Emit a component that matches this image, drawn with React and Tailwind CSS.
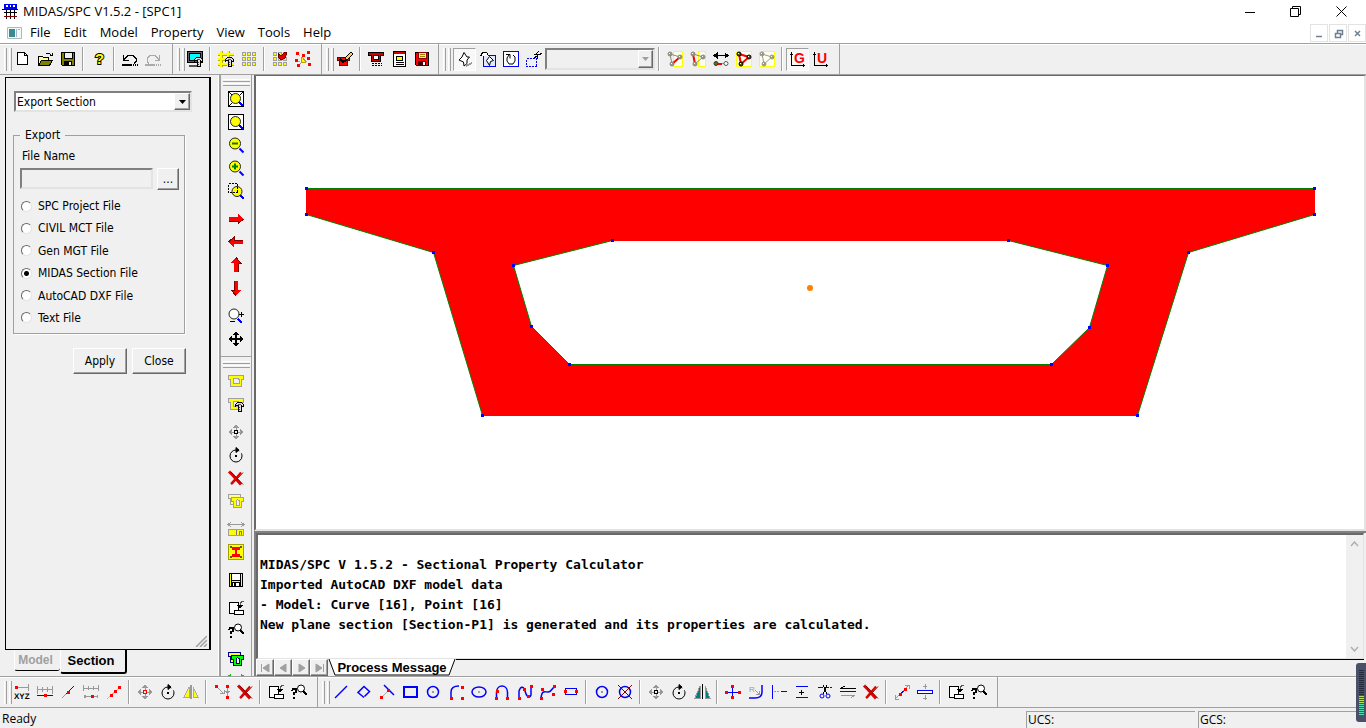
import { useState } from 'react'

const HAMMER = (
  <g>
    <path d="M7.5 8.5l2-2h4l2 2v2h-1l-1-1v6h-3v-6h-2l-1 1z" fill="#ddd" stroke="#000" />
    <path d="M10 8h3v1h-3zM11 11h1v1h-1zM11 13h1v1h-1z" fill="#555" />
  </g>
)

const CROSS = (
  <g fill="none" shapeRendering="auto">
    <path d="M1 1.5l4 4 8 9" stroke="#e00000" strokeWidth="3" />
    <path d="M13 2.5L3 14" stroke="#e00000" strokeWidth="2" />
    <path d="M4 14.5L15 2.5M3 2l12 12.5" stroke="#900000" />
  </g>
)

const EXPORT = (
  <g>
    <path d="M1.5 2.5h9v11h-9z" fill="#fff" stroke="#000" />
    <path d="M6.5 10.5h9v4h-9z" fill="#fff" stroke="#000" />
    <path d="M15.5 1.5h-2l-1 2v4" fill="none" stroke="#555" />
    <path d="M9 5h6l-3 4z" fill="#000" />
  </g>
)

const QUERY = (
  <g fill="none" stroke="#000">
    <path d="M1 7l1-2h3v3l-2 1v2M3 13v2" strokeWidth="2" />
    <circle cx="10" cy="4.500" r="3.500" fill="#fff" shapeRendering="auto" />
    <path d="M12 7l4 4" strokeWidth="2" />
  </g>
)

const ROTATE = (
  <g fill="none" stroke="#000" shapeRendering="auto">
    <circle cx="8" cy="9" r="6" strokeDasharray="31 3" />
    <path d="M8 .5v5l3-2.500z" fill="#000" />
    <path d="M7 8h2v2H7z" fill="#000" stroke="none" />
  </g>
)

const SQUARES = [1, 6, 11].map((y) =>
  [1, 6, 11].map((x) => (
    <rect key={`${x}-${y}`} x={x + 0.5} y={y + 0.5} width="3" height="3" fill="#ff0" stroke="#a0a0a0" />
  ))
)

const HEADS = 'M5 4l3-4 3 4zM5 12l3 4 3-4zM4 5L0 8l4 3zM12 5l4 3-4 3z'

function moveIcon(stroke, dot) {
  return (
    <g>
      <path d="M8 2v12M2 8h12" stroke={stroke} fill="none" />
      <path d={HEADS} fill={stroke} />
      <path d="M6.500 6.500h3v3h-3z" fill="#f0f0f0" stroke={dot} />
    </g>
  )
}

function redDots(points) {
  return points.map(([x, y]) => <rect key={`${x}-${y}`} x={x - 1} y={y - 1} width="3" height="3" fill="#f00" />)
}

function lens(sign) {
  return (
    <g shapeRendering="auto">
      <path d="M11.500 11.500l4 4" stroke="#00f" strokeWidth="2" />
      <circle cx="7" cy="6.500" r="5.500" fill="#ff0" stroke="#222" />
      {sign && <path d={sign} stroke="#008000" strokeWidth="2" />}
    </g>
  )
}

function fitLens(corners) {
  return (
    <g>
      <path d="M.5.5h15v15H.5z" fill="#fff" stroke="#000" />
      {corners && <path d="M1 1l3 3M15 1l-3 3M1 15l3-3" stroke="#000" />}
      <path d="M11 11l4 4" stroke="#00f" strokeWidth="2" />
      <circle cx="7.500" cy="7.500" r="5" fill="#ff0" stroke="#222" shapeRendering="auto" />
    </g>
  )
}

function arrow(turn) {
  return (
    <g transform={`rotate(${turn} 8 8)`}>
      <path d="M1 6h9V3l5.500 5-5.500 5v-3H1z" fill="#f00" />
      <path d="M1 10h9v3l5.500-5" stroke="#800000" fill="none" />
    </g>
  )
}

function nodes(red, line, box) {
  return (
    <g shapeRendering="auto">
      {box && <path d={box} fill="#fffff0" stroke="#ff0" />}
      <path d="M3 3l2 10M5 13l8-7M3 3l10 3" fill="none" stroke={line} />
      {red && <path d={red} fill="none" stroke="#f00" strokeWidth="2" />}
      {[[3, 3], [5, 13], [13, 6]].map(([x, y]) => (
        <g key={x}>
          <circle cx={x} cy={y} r="2" fill={line === '#000' ? '#606000' : '#9a9a70'} stroke={line} />
          <path d={`M${x - 1} ${y - 1}h1v1h-1z`} fill="#fff" />
        </g>
      ))}
    </g>
  )
}

function disk(body, label) {
  return (
    <g>
      <path d="M1.500 1.500h13v13h-12l-1-1z" fill={body} stroke="#000" />
      <path d="M4.500 1.500h8v6h-8z" fill={label} stroke="#000" />
      <path d="M4 10h8v5H4z" fill="#000" />
      <path d="M9 11h2v3H9z" fill="#f0f0f0" />
    </g>
  )
}

function section(fill, stroke) {
  return (
    <path
      d="M.5 2.500h15v4h-2v7h-11v-7h-2zM6 5.500l-1 1v4h6v-4l-1-1z"
      fillRule="evenodd"
      fill={fill}
      stroke={stroke}
    />
  )
}

function floodShape(front, back, stroke) {
  return (
    <g>
      <path d="M.5 1.500h12v4h-2v6h-8v-6h-2z" fill={back} stroke={stroke} />
      <path d="M3.500 4.500h12v4h-2v6h-8v-6h-2z" fill={front} stroke={stroke} />
      <path d="M8 12.500v-5l1.500-1 1.500 1v5z" fill="#f0f0f0" stroke={stroke} />
    </g>
  )
}

const circleShape = (
  <g>
    <circle cx="8" cy="8" r="5.500" fill="none" stroke="#00f" strokeWidth="1.500" shapeRendering="auto" />
    <path d="M7 7h2v2H7z" fill="#999" />
  </g>
)

const ICONS = {
  new: <path d="M3.500 1.500h7l3 3v9h-10zM10.500 1.500v3h3" fill="#fff" stroke="#000" />,
  open: (
    <g stroke="#000">
      <path d="M1.500 14V5.500h4l1 1h5v3" fill="#ffff99" />
      <path d="M1.500 14.500l3-5h11l-3 5z" fill="#808000" />
      <path d="M8.500 3.500l1-1h3l2 2M15.500 1.500v3h-3" fill="none" />
    </g>
  ),
  save: disk('#808000', '#f0f0f0'),
  help: (
    <text x="4" y="13" fontFamily="Liberation Sans" fontWeight="700" fontSize="15" fill="#ff0" stroke="#000" strokeWidth="2" paintOrder="stroke" shapeRendering="auto">?</text>
  ),
  undo: (
    <g fill="none" stroke="#000">
      <path d="M1.500 4v5h5" />
      <path d="M2 8.500l4-4h5l3 3v3l-2 2" />
      <path d="M0 13.500h10" strokeWidth="2" />
      <path d="M11 13.500h5" strokeWidth="2" strokeDasharray="1 1" />
    </g>
  ),
  redo: (
    <g fill="none" stroke="#aaa">
      <path d="M14.500 4v5h-5" />
      <path d="M14 8.500l-4-4H5l-3 3v3l2 2" />
      <path d="M0 13.500h10" strokeWidth="2" />
      <path d="M11 13.500h5" strokeWidth="2" strokeDasharray="1 1" />
    </g>
  ),
  display: (
    <g>
      <path d="M.5.5h15v11H.5z" fill="#606060" stroke="#000" />
      <path d="M2.500 2.500h11v7h-11z" fill="#0ff" stroke="#000" />
      <path d="M2 14.500h10" stroke="#555" strokeWidth="2" />
      {HAMMER}
    </g>
  ),
  gridSet: (
    <g>
      <path d="M0 3.500h16M0 8.500h16M0 13.500h16M3.500 0v16M10.500 0v16" stroke="#b0b000" strokeWidth="2" />
      <path d="M0 2.500h16M0 7.500h16M0 12.500h16M2.500 0v16M9.500 0v16" stroke="#ff0" strokeWidth="2" />
      {HAMMER}
    </g>
  ),
  grid: <g>{SQUARES}</g>,
  gridSnap: (
    <g>
      {SQUARES}
      <path d="M6 2l3 3 4-4h2l-2 6-4 2-3-3z" fill="#e00000" stroke="#700000" />
    </g>
  ),
  scatter: (
    <g>
      <path d="M4 4l8 7M3 11l7-5" stroke="#aaa" strokeDasharray="2 2" />
      {redDots([[2, 2], [8, 4], [13, 1], [1, 9], [13, 7], [3, 14], [14, 13]])}
      <path d="M7 6l4 5-5 1z" fill="#ff0" stroke="#c0a000" />
    </g>
  ),
  sectionEdit: (
    <g>
      <path d="M.5 6.500h12v3h-2v5h-8v-5h-2z" fill="#f00" stroke="#600" />
      <path d="M8 10l1-4 5-5 2 2-5 5z" fill="#ffd060" stroke="#000" />
      <path d="M3 8l3 3 3-2" fill="none" stroke="#000" strokeWidth="2" />
    </g>
  ),
  sectionList: (
    <g>
      <path d="M.5 1.500h15v3h-3v6h-9v-6h-3z" fill="#d00000" stroke="#000" />
      <path d="M5.500 4.500h5v4h-5z" fill="#fff" stroke="#000" />
      <path d="M4 12.500h10M4 14.500h10" stroke="#000" strokeDasharray="2 1" />
    </g>
  ),
  report: (
    <g>
      <path d="M2.500.5h12v15h-12z" fill="#fff" stroke="#000" />
      <path d="M3 1h11v2H3z" fill="#d00000" />
      <path d="M5.500 5.500h6v4h-6z" fill="#ff0" stroke="#000" />
      <path d="M5 11.500h8M5 13.500h8" stroke="#000" />
    </g>
  ),
  saveRed: (
    <g>
      <path d="M1.500 1.500h13v13h-12l-1-1z" fill="#f00" stroke="#000" />
      <path d="M4.500 1.500h8v6h-8z" fill="#ff0" stroke="#800" />
      <path d="M6 3.500h5M6 5.500h5" stroke="#a08000" />
      <path d="M4 10h8v5H4z" fill="#400" />
      <path d="M9 11h2v3H9z" fill="#fff" />
    </g>
  ),
  selPick: (
    <g>
      <path d="M7 1.500l3 4.500h2.500L10 9v3.500L7 15l-.500-4L2 9l3-3z" fill="#fff" stroke="#000" shapeRendering="auto" />
      <path d="M9 15l6-3" stroke="#999" strokeWidth="2" />
    </g>
  ),
  selWindow: (
    <g>
      <path d="M3.500 4.500h12v11h-12z" fill="#dfe8ff" stroke="#00f" />
      <path d="M.5 5.500l2-4h4l2 3" fill="#fff" stroke="#000" />
      <path d="M9.500 5.500l4 4-3 1-1 4-3-5z" fill="#fff" stroke="#000" shapeRendering="auto" />
    </g>
  ),
  selPolygon: (
    <g>
      <path d="M.5.5h15v15H.5z" fill="#fff" stroke="#00f" />
      <path d="M3 3.500h4v4M6 4L4 7v3l2 3h4l2-3V6l-2-2" fill="none" stroke="#000" shapeRendering="auto" />
    </g>
  ),
  selCross: (
    <g>
      <path d="M.5 7.500h10v8H.5z" fill="none" stroke="#00f" strokeDasharray="2 1" />
      <path d="M7 8l5-4M8 3.500h5M12 8L11 5M10 2.500l3-2M13 3.500l3-1" stroke="#000" fill="none" />
    </g>
  ),
  nodeA: nodes('M5 13l8-7', '#888', 'M6.500.5h9v15h-9z'),
  nodeB: nodes('M3 3l2 10', '#888', 'M8.500.5h7v15h-7z'),
  nodeSwap: (
    <g>
      <path d="M1 4.500h14" stroke="#000" />
      <path d="M4 2v5L1 4.500zM12 2v5l3-2.500z" fill="#000" stroke="#000" />
      <path d="M4 12.500h9" stroke="#999" />
      <path d="M4 12.500h5" stroke="#f00" strokeWidth="2" />
      <circle cx="3" cy="12.500" r="2" fill="#707000" stroke="#333" shapeRendering="auto" />
      <circle cx="13" cy="12.500" r="2" fill="#fff" stroke="#555" shapeRendering="auto" />
    </g>
  ),
  nodeC: nodes('M3 3l2 10 8-7z', '#000', 'M.5.5h15v15H.5z'),
  nodeD: nodes(null, '#999', 'M.5.5h15v15H.5z'),
  axisG: (
    <g>
      <path d="M1.500 15V1M0 3.500h3M1 14.500h14M13.500 13v3" stroke="#000" />
      <text x="4" y="12" fontFamily="Liberation Sans" fontWeight="700" fontSize="14" fill="#f00">G</text>
    </g>
  ),
  axisU: (
    <g>
      <path d="M1.500 15V1M0 3.500h3M1 14.500h14M13.500 13v3" stroke="#000" />
      <text x="4" y="12" fontFamily="Liberation Sans" fontWeight="700" fontSize="14" fill="#f00">U</text>
    </g>
  ),
  zoomAll: fitLens(true),
  zoomFit: fitLens(false),
  zoomOut: lens('M4 6.500h6'),
  zoomIn: lens('M4 6.500h6M7 3.500v6'),
  zoomWindow: (
    <g>
      <path d="M12 12l4 4" stroke="#00f" strokeWidth="2" />
      <circle cx="9" cy="8.500" r="5" fill="#ff0" stroke="#222" shapeRendering="auto" />
      <path d="M.5.5h9v9h-9z" fill="none" stroke="#000" strokeDasharray="2 1" />
    </g>
  ),
  right: arrow(0),
  left: arrow(180),
  up: arrow(270),
  down: arrow(90),
  zoomDynamic: (
    <g>
      <path d="M10 11l4 4" stroke="#00f" strokeWidth="2" />
      <circle cx="6" cy="6" r="5" fill="#fff" stroke="#222" shapeRendering="auto" />
      <path d="M11 6.500h5M13.500 4v5M2 13.500h5" stroke="#000" />
    </g>
  ),
  pan: (
    <g>
      <path d="M8 1v14M1 8h14" stroke="#000" strokeWidth="2" />
      <path d={HEADS} fill="#000" />
    </g>
  ),
  section: section('#ff0', '#a0a0a0'),
  sectionSet: (
    <g>
      {section('#ff0', '#a0a0a0')}
      {HAMMER}
    </g>
  ),
  moveGray: moveIcon('#999', '#000'),
  movePoint: moveIcon('#999', '#f00'),
  rotate: ROTATE,
  remove: CROSS,
  sectionCopy: floodShape('#ff0', '#ffff80', '#a0a0a0'),
  sectionWidth: (
    <g>
      <path d="M1 3.500h14M3 1L0 3.500 3 6M13 1l3 2.500L13 6" fill="none" stroke="#999" />
      <path d="M.5 8.500h15v6H.5z" fill="#ff0" stroke="#a0a0a0" />
      <path d="M8 9v5M11.500 14v-4h2v4" stroke="#777" fill="none" />
    </g>
  ),
  beam: (
    <g>
      <path d="M.5.5h15v15H.5z" fill="#ff0" stroke="#a0a000" />
      <path d="M2 2h2v2H2zM12 2h2v2h-2zM2 12h2v2H2zM12 12h2v2h-2z" fill="#555" />
      <path d="M4 3h8v3H9v4h3v3H4v-3h3V6H4z" fill="#f00" />
    </g>
  ),
  saveBlack: (
    <g>
      <path d="M1 1h14v14H1z" fill="#000" />
      <path d="M4 2h8v6H4z" fill="#fff" />
      <path d="M2 2h1v12H2zM13 2h1v12h-1zM4 9h8v1H4z" fill="#ff0" />
      <path d="M5 11h6v3H5z" fill="#fff" />
      <path d="M6 11h2v3H6z" fill="#000" />
    </g>
  ),
  exportTo: EXPORT,
  query: QUERY,
  sectionGreen: floodShape('#0f0', '#ff0', '#000080'),
  check: <path d="M1 1l6 7M15 1L3 15" stroke="#0c0" strokeWidth="3" />,
  pointXyz: (
    <g>
      <path d="M4 3.500h11M14.500 0v7" stroke="#999" />
      {redDots([[2, 3]])}
      <text x="0" y="15" fontFamily="Liberation Sans" fontWeight="700" fontSize="8" textRendering="geometricPrecision">XYZ</text>
    </g>
  ),
  pointSplit: (
    <g>
      <path d="M.5 2v8M15.500 2v8M5.500 3v5M10.500 3v5M1 5.500h14" stroke="#999" />
      <path d="M0 11.500h16" stroke="#00f" />
      {redDots([[8, 11]])}
    </g>
  ),
  pointLine: (
    <g>
      <path d="M3 13L14 2" stroke="#00f" />
      <path d="M2 14l4-4" stroke="#999" />
      {redDots([[8, 8]])}
    </g>
  ),
  pointDivide: (
    <g>
      <path d="M.5 1v6M15.500 1v6M5.500 2v4M10.500 2v4M1 4.500h14M2 12.500h12" stroke="#999" />
      {redDots([[9, 12]])}
      <path d="M1 11h2v3H1zM14 11h1v3h-1z" fill="#999" />
    </g>
  ),
  pointOffset: (
    <g>
      <path d="M1 15L14 3" stroke="#bbb" />
      {redDots([[5, 11], [9, 7], [13, 3]])}
    </g>
  ),
  mirrorPoint: (
    <g>
      <path d="M8 1v14" stroke="#999" strokeWidth="2" />
      <path d="M6 3v10H1zM10 3v10h5z" fill="#ff0" stroke="#aaa" />
    </g>
  ),
  pointMerge: (
    <g>
      <path d="M3 3l7 7M6 9h4V6M13 4v8" fill="none" stroke="#999" />
      {redDots([[2, 2], [13, 2], [13, 13]])}
      <path d="M11 7h5l-2.500 3z" fill="#999" />
    </g>
  ),
  line: <path d="M2 14L14 2" stroke="#00f" strokeWidth="1.500" shapeRendering="auto" />,
  polyline: <path d="M8 13.500L2 8.500l6-6 5.500 5-5 5" fill="none" stroke="#00f" strokeWidth="1.500" shapeRendering="auto" />,
  tangent: (
    <g shapeRendering="auto">
      <path d="M5 1l10 10" stroke="#00f" strokeWidth="1.500" />
      <path d="M3 13l6-6" stroke="#aaa" />
      {redDots([[2, 13], [9, 6]])}
    </g>
  ),
  rect: <path d="M2 3h13v10H2z" fill="none" stroke="#00f" strokeWidth="2" />,
  circle: circleShape,
  arc: (
    <g>
      <path d="M3 13V8c0-4 3-6 8-6" fill="none" stroke="#00f" strokeWidth="1.500" shapeRendering="auto" />
      {redDots([[14, 3], [3, 14], [14, 14]])}
    </g>
  ),
  ellipse: (
    <g>
      <ellipse cx="8" cy="8" rx="7" ry="5" fill="none" stroke="#00f" strokeWidth="1.500" shapeRendering="auto" />
      <path d="M7 7h2v2H7z" fill="#aaa" />
    </g>
  ),
  arch: (
    <g>
      <path d="M2.500 13V8C3 0 13 0 13.500 8v5" fill="none" stroke="#00f" strokeWidth="1.500" shapeRendering="auto" />
      {redDots([[2, 14], [3, 7], [13, 14]])}
    </g>
  ),
  spline: (
    <g>
      <path d="M2 13V7c2-6 5-4 6 0s4 9 6 4V2" fill="none" stroke="#00f" strokeWidth="1.500" shapeRendering="auto" />
      {redDots([[2, 14], [7, 5], [14, 2], [11, 12]])}
    </g>
  ),
  curve: (
    <g>
      <path d="M1 14c1-8 3-6 7-6s3-4 7-5" fill="none" stroke="#00f" strokeWidth="1.500" shapeRendering="auto" />
      {redDots([[1, 14], [2, 5], [14, 2], [13, 10]])}
    </g>
  ),
  link: (
    <g>
      <path d="M2.500 4.500h11v6h-11z" fill="none" stroke="#00f" />
      {redDots([[2, 7], [13, 7]])}
    </g>
  ),
  circleCut: (
    <g>
      {circleShape}
      <path d="M1 1l14 14M15 1L1 15" stroke="#800000" shapeRendering="auto" />
    </g>
  ),
  mirror: (
    <g>
      <path d="M8.500 0v15" stroke="#000" />
      <path d="M6 2v12H1z" fill="#008080" stroke="#999" />
      <path d="M11 2v12h5z" fill="#008080" stroke="#999" />
    </g>
  ),
  intersect: (
    <g>
      <path d="M7.500 3v11M2 8.500h12" stroke="#00f" />
      {redDots([[7, 2], [7, 13], [1, 8], [14, 8]])}
    </g>
  ),
  fillet: (
    <g>
      <path d="M14 1v7c0 4-3 6-7 6H1" fill="none" stroke="#00f" strokeWidth="1.500" shapeRendering="auto" />
      <text x="1" y="8" fontFamily="Liberation Sans" fontSize="8" fill="#999">R</text>
      <path d="M7 6l4 4M11 7v3H8" stroke="#999" fill="none" />
    </g>
  ),
  extend: (
    <g>
      <path d="M1.500 1v14M10 7.500h6" stroke="#00f" />
      <path d="M3 7.500h6" stroke="#999" strokeDasharray="2 1" />
    </g>
  ),
  offset: (
    <g>
      <path d="M2 2.500h12M2 13.500h12" stroke="#00f" />
      <path d="M5 8.500h5M7.500 6v5" stroke="#000" />
    </g>
  ),
  trim: (
    <g>
      <path d="M1 3.500h14" stroke="#00f" strokeDasharray="5 1" />
      <path d="M6 1l4 9M10 1L6 10" stroke="#000" />
      <circle cx="5" cy="12" r="2" fill="none" stroke="#00f" shapeRendering="auto" />
      <circle cx="11" cy="12" r="2" fill="none" stroke="#00f" shapeRendering="auto" />
    </g>
  ),
  parallel: (
    <g>
      <path d="M0 4.500h16M5 2L1 4" stroke="#000" />
      <path d="M0 7.500h16" stroke="#00f" />
      <path d="M1 11.500h14M15 11l-4 3" stroke="#999" />
    </g>
  ),
  stretch: (
    <g>
      <path d="M1 15L15 1M11 1h4v4M1 11v4h4" fill="none" stroke="#999" />
      <path d="M6 10l5-4" stroke="#00f" />
      {redDots([[6, 10], [11, 5]])}
    </g>
  ),
  thicken: (
    <g>
      <path d="M8 0v5M6 2h4M8 11v5M6 14h4" stroke="#999" />
      <path d="M.5 6.500h15v3H.5z" fill="#fff" stroke="#00f" />
    </g>
  ),
}

const TOP_GROUPS = [
  { box: 'w-[173px] pl-[10px]', items: ['new', 'open', 'save', '|', 'help', '|', 'undo', 'redo'] },
  { box: 'w-[149px] pl-[10px]', items: ['display', '|', 'gridSet', 'grid', '|', 'gridSnap', 'scatter'] },
  { box: 'w-[117px] pl-[11px]', items: ['sectionEdit', '|', 'sectionList', 'report', 'saveRed'] },
  {
    box: 'w-[401px] pl-[14px]',
    items: ['selPick', 'selWindow', 'selPolygon', 'selCross', 'combo', '|', 'nodeA', 'nodeB', 'nodeSwap', 'nodeC', 'nodeD', '|', 'axisG', 'axisU'],
  },
]

const BOTTOM_GROUPS = [
  {
    box: 'w-[318px] pl-[10px]',
    items: ['pointXyz', 'pointSplit', 'pointLine', 'pointDivide', 'pointOffset', '|', 'movePoint', 'rotate', 'mirrorPoint', '|', 'pointMerge', 'remove', '|', 'exportTo', 'query'],
  },
  {
    box: 'w-[680px] pl-[11px]',
    items: [
      'line', 'polyline', 'tangent', 'rect', 'circle', 'arc', 'ellipse', 'arch', 'spline', 'curve', 'link', '|',
      'circle', 'circleCut', '|', 'moveGray', 'rotate', 'mirror', '|',
      'intersect', 'fillet', 'extend', 'offset', 'trim', 'parallel', 'remove', '|',
      'stretch', 'thicken', '|', 'exportTo', 'query',
    ],
  },
]

const VIEW_TOOLS = [
  ['zoomAll', 'zoomFit', 'zoomOut', 'zoomIn', 'zoomWindow'],
  ['right', 'left', 'up', 'down'],
  ['zoomDynamic', 'pan'],
]

const MODEL_TOOLS = [
  ['section', 'sectionSet'],
  ['moveGray', 'rotate', 'remove', 'sectionCopy'],
  ['sectionWidth', 'beam'],
  ['saveBlack'],
  ['exportTo', 'query'],
  ['sectionGreen', 'check'],
]

const PRESSED = ['selPick', 'axisG']

const FORMATS = ['SPC Project File', 'CIVIL MCT File', 'Gen MGT File', 'MIDAS Section File', 'AutoCAD DXF File', 'Text File']

const OUTER = [[50, 112], [1058, 112], [1058, 138], [932, 176], [881, 339], [226, 339], [177, 176], [50, 138]]
const INNER = [[356, 164], [752, 164], [851, 189], [833, 251], [795, 288], [313, 288], [275, 250], [257, 189]]

const RAISED = 'bg-[#f0f0f0] border border-t-white border-l-white border-r-[#696969] border-b-[#696969] shadow-[inset_-1px_-1px_0_#a0a0a0]'
const SUNKEN = 'border-2 border-t-[#808080] border-l-[#808080] border-r-[#e3e3e3] border-b-[#e3e3e3]'

function ToolButton({ name }) {
  const pressed = PRESSED.includes(name)
  return (
    <button
      aria-label={name}
      className={`flex h-[23px] w-[23px] shrink-0 items-center justify-center ${
        pressed ? 'border border-t-[#a0a0a0] border-l-[#a0a0a0] border-r-white border-b-white bg-[#f8f8f8]' : ''
      }`}
    >
      <svg width="16" height="16" viewBox="0 0 16 16" className="shrink-0 overflow-visible" shapeRendering="crispEdges">
        {ICONS[name]}
      </svg>
    </button>
  )
}

function Grip() {
  return (
    <span className="absolute top-[4px] bottom-[3px] left-[4px] flex gap-[2px]">
      <span className="w-[3px] border-r border-l border-r-[#a0a0a0] border-l-white" />
      <span className="w-[3px] border-r border-l border-r-[#a0a0a0] border-l-white" />
    </span>
  )
}

function ToolGroup({ group }) {
  return (
    <div className={`relative flex shrink-0 items-center border-r border-[#a0a0a0] ${group.box}`}>
      <Grip />
      {group.items.map((item, i) => {
        if (item === '|') return <span key={i} className="mx-[3px] h-[24px] w-[2px] shrink-0 border-r border-l border-r-white border-l-[#a0a0a0]" />
        if (item === 'combo') {
          return (
            <div key={i} className="relative h-[22px] w-[110px] shrink-0">
              <select disabled aria-label="Selection" className={`h-full w-full appearance-none bg-[#f0f0f0] ${SUNKEN}`} />
              <span className={`pointer-events-none absolute top-[2px] right-[2px] bottom-[2px] flex w-[15px] items-center justify-center ${RAISED}`}>
                <svg width="7" height="4"><path d="M0 0h7L3.500 4z" fill="#a0a0a0" /></svg>
              </span>
            </div>
          )
        }
        return <ToolButton key={i} name={item} />
      })}
    </div>
  )
}

function SideTools({ rows }) {
  return (
    <div className="flex flex-col items-center gap-px pt-[2px]">
      <span className="h-[3px] w-[27px] border-t border-b border-t-white border-b-[#a0a0a0]" />
      <span className="h-[3px] w-[27px] border-t border-b border-t-white border-b-[#a0a0a0]" />
      <div className="flex flex-col gap-[5px]">
        {rows.map((row, i) => (
          <div key={i}>
            {row.map((name) => <ToolButton key={name} name={name} />)}
          </div>
        ))}
      </div>
    </div>
  )
}

function ExportPanel() {
  const [format, setFormat] = useState('MIDAS Section File')
  return (
    <aside className="flex w-[219px] shrink-0 flex-col border-r border-white pt-[2px] pl-[5px]">
      <div className="relative mr-[7px] flex-1 border-t border-r-2 border-b border-l border-black bg-[#f0f0f0] pt-[13px] pl-[7px] font-['DejaVu_Sans_Condensed','DejaVu_Sans',sans-serif] text-[12px] leading-[16px] [font-stretch:condensed]">
        <div className="relative ml-px h-[21px] w-[178px]">
          <select aria-label="Task" className={`h-full w-full appearance-none bg-white pl-px ${SUNKEN}`}>
            <option>Export Section</option>
          </select>
          <span className={`pointer-events-none absolute top-[2px] right-[2px] bottom-[2px] flex w-[16px] items-center justify-center ${RAISED}`}>
            <svg width="7" height="4"><path d="M0 0h7L3.500 4z" /></svg>
          </span>
        </div>

        <fieldset className="mt-[15px] h-[207px] w-[172px] border border-[#a0a0a0] pr-[5px] pl-[6px] shadow-[1px_1px_0_#fff]">
          <legend className="px-[5px]">Export</legend>
          <label htmlFor="file-name" className="mt-[5px] block pl-[2px]">File Name</label>
          <div className="mt-[4px] flex gap-[4px]">
            <input id="file-name" className={`h-[21px] w-[133px] bg-[#f0f0f0] px-[2px] outline-none ${SUNKEN}`} />
            <button className={`h-[22px] w-[22px] ${RAISED}`}>...</button>
          </div>
          <div className="mt-[5px] flex h-[134px] flex-col justify-between">
            {FORMATS.map((item) => (
              <label key={item} className="flex h-[22px] items-center gap-[6px] pl-px whitespace-nowrap">
                <input
                  type="radio"
                  name="format"
                  checked={format === item}
                  onChange={() => setFormat(item)}
                  className="h-[11px] w-[11px] shrink-0 appearance-none rounded-full border border-t-[#696969] border-l-[#696969] border-r-[#e3e3e3] border-b-[#e3e3e3] bg-white checked:bg-[radial-gradient(#000_0_2px,#fff_3px)]"
                />
                {item}
              </label>
            ))}
          </div>
        </fieldset>

        <div className="mt-[14px] flex gap-[5px] pl-[60px]">
          <button className={`h-[26px] w-[54px] ${RAISED}`}>Apply</button>
          <button className={`h-[26px] w-[54px] ${RAISED}`}>Close</button>
        </div>

        <svg width="12" height="12" className="absolute right-[2px] bottom-[2px]">
          <path d="M1 12L12 1M5 12l7-7M9 12l3-3" stroke="#a0a0a0" strokeWidth="1.500" />
        </svg>
      </div>
      <div className="flex h-[26px] items-start pl-[9px] font-['Liberation_Sans',sans-serif] text-[13px] font-bold">
        <button className="h-[21px] w-[46px] rounded-b-[3px] border-b border-l border-b-black border-l-white pr-[4px] text-[12px] text-[#a0a0a0]">Model</button>
        <button className="-mt-px h-[25px] w-[67px] rounded-b-[3px] border-r-2 border-b-2 border-l border-r-black border-b-black border-l-white bg-[#f0f0f0] pr-[4px]">
          Section
        </button>
      </div>
    </aside>
  )
}

function SectionView() {
  const path = [OUTER, INNER].map((pts) => `M${pts.map((p) => p.join(' ')).join('L')}Z`).join('')
  return (
    <div className="min-h-0 flex-1 border-t border-r-2 border-b-2 border-l-2 border-t-[#696969] border-r-[#e3e3e3] border-b-[#e3e3e3] border-l-[#696969] bg-white">
      <svg viewBox="0 0 1108 453" className="h-full w-full">
        <g transform="translate(0.5 0.5)">
          <path d={path} fillRule="evenodd" fill="#f00" stroke="#008000" />
          <path d="M50 113v24M1058 113v24M227 339h653M357 164h394" stroke="#f00" />
          {[...OUTER, ...INNER].map(([x, y]) => (
            <rect key={`${x}-${y}`} x={x - 1.5} y={y - 1.5} width="3" height="3" fill="#00f" />
          ))}
          <circle cx="553.5" cy="211.5" r="3" fill="#ff8000" />
        </g>
      </svg>
    </div>
  )
}

function MessagePane() {
  return (
    <div className="flex h-[145px] shrink-0 flex-col border-t-2 border-l-2 border-[#808080] pr-[2px]">
      <div className="flex min-h-0 flex-1 border-t-2 border-r border-b border-l-2 border-t-[#696969] border-r-[#e3e3e3] border-b-[#e3e3e3] border-l-[#696969] bg-white">
        <pre className="min-w-0 flex-1 pt-[20px] pl-[2px] font-['DejaVu_Sans_Mono',monospace] text-[13px] leading-[20px] font-bold">
{`MIDAS/SPC V 1.5.2 - Sectional Property Calculator
Imported AutoCAD DXF model data
- Model: Curve [16], Point [16]
New plane section [Section-P1] is generated and its properties are calculated.`}
        </pre>
        <div className="flex w-[17px] flex-col items-center justify-between bg-[#f0f0f0] py-[6px]">
          <svg width="9" height="6"><path d="M1 5l3.500-4L8 5" fill="none" stroke="#b0b0b0" strokeWidth="1.500" /></svg>
          <svg width="9" height="6"><path d="M1 1l3.500 4L8 1" fill="none" stroke="#b0b0b0" strokeWidth="1.500" /></svg>
        </div>
      </div>
      <div className="flex h-[17px] shrink-0">
        {['M3.500 3v8M11 3v8L5 7z', 'M10 3v8L4 7z', 'M5 3v8l6-4z', 'M11.500 3v8M4 3v8l6-4z'].map((d) => (
          <button key={d} aria-label="Scroll tabs" className={`flex h-[17px] w-[18px] items-center justify-center ${RAISED}`}>
            <svg width="14" height="14"><path d={d} fill="#a0a0a0" stroke="#a0a0a0" /></svg>
          </button>
        ))}
        <button className="relative h-[17px] w-[128px] font-['Liberation_Sans',sans-serif] text-[13px] leading-[16px] font-bold">
          <svg viewBox="0 0 128 17" className="absolute inset-0 h-full w-full">
            <path d="M1 0l6 16h114l6-16" fill="#fff" stroke="#000" />
          </svg>
          <span className="relative">Process Message</span>
        </button>
        <div className="flex-1 border-t border-black" />
      </div>
    </div>
  )
}

function VolumeWidget() {
  return (
    <div className="absolute right-0 bottom-[6px] flex h-[59px] w-[10px] flex-col justify-end gap-px rounded-l-[3px] bg-[#4a5068] py-[7px] pr-[2px] pl-[3px]">
      {Array.from({ length: 23 }, (_, i) => (
        <span key={i} className={`h-px shrink-0 ${i < 13 ? 'bg-[#252a38]' : i < 17 ? 'bg-[#b4e060]' : 'bg-[#50e0b0]'}`} />
      ))}
    </div>
  )
}

export default function App() {
  return (
    <div className="relative flex h-screen flex-col overflow-hidden bg-[#f0f0f0] font-['Open_Sans','Noto_Sans',sans-serif] text-[12px] text-black">
      <header className="bg-white text-[13px]">
        <div className="flex h-[23px] items-center pl-[2px]">
          <svg width="16" height="16" viewBox="0 0 16 16" shapeRendering="crispEdges">
            <path d="M2 0h13v5H2z" fill="#00f" />
            <path d="M4 1h2v2H4zM8 1h1v2H8zM11 1h2v2h-2z" fill="#fff" />
            <path d="M0 5.500h16M2 8.500h13M4.500 5v10M8.500 5v10M12.500 5v10" stroke="#000" />
            <path d="M2 12.500h13" stroke="#800000" />
          </svg>
          <h1 className="ml-[5px] flex-1">MIDAS/SPC V1.5.2 - [SPC1]</h1>
          <div className="flex items-center gap-[35px] pr-[19px]">
            <button aria-label="Minimize"><svg width="10" height="10"><path d="M0 5.500h10" stroke="#000" /></svg></button>
            <button aria-label="Restore"><svg width="11" height="11"><path d="M.5 2.500h8v8h-8zM2.500 2.500v-2h8v8h-2" fill="none" stroke="#000" /></svg></button>
            <button aria-label="Close"><svg width="11" height="11"><path d="M.5.5l10 10M10.500.5l-10 10" stroke="#000" /></svg></button>
          </div>
        </div>
        <div className="flex h-[20px] items-center">
          <svg width="15" height="12" className="mr-[8px] ml-[7px]">
            <path d="M.5.5h14v11H.5z" fill="#f4f8fa" stroke="#b0b8bc" />
            <path d="M2 2h6v8H2z" fill="#3b8a90" />
            <path d="M9 2h1v8H9zM11 2h2v1h-2z" fill="#a0b8c8" />
          </svg>
          <nav className="flex flex-1 gap-[13px]">
            {['File', 'Edit', 'Model', 'Property', 'View', 'Tools', 'Help'].map((item) => <button key={item}>{item}</button>)}
          </nav>
          <div className="flex gap-px">
            {['M5 11.500h6', 'M5.500 8.500h5v4h-5zM7.500 8.500v-3h5v4h-2', 'M6 6l5 5M11 6l-5 5'].map((d) => (
              <button key={d} aria-label="Document window" className="h-[18px] w-[18px] border border-[#e3e3e3]">
                <svg width="16" height="16"><path d={d} fill="none" stroke="#708090" strokeWidth="1.500" /></svg>
              </button>
            ))}
          </div>
        </div>
      </header>

      <div className="flex h-[32px] shrink-0 border-t border-b border-[#a0a0a0] shadow-[inset_0_1px_0_#fff]">
        {TOP_GROUPS.map((group, i) => <ToolGroup key={i} group={group} />)}
      </div>

      <main className="flex min-h-0 flex-1">
        <ExportPanel />
        <div className="w-[35px] shrink-0 overflow-hidden border-l-2 border-[#a0a0a0] pr-[2px]">
          <div className="h-[282px] border-r border-b border-[#a0a0a0] pt-[2px]">
            <SideTools rows={VIEW_TOOLS} />
          </div>
          <div className="h-[320px] border-r border-[#a0a0a0] pt-[2px]">
            <SideTools rows={MODEL_TOOLS} />
          </div>
        </div>
        <div className="flex min-w-0 flex-1 flex-col">
          <SectionView />
          <MessagePane />
        </div>
      </main>

      <div className="flex h-[32px] shrink-0 border-t border-b border-[#a0a0a0] shadow-[inset_0_1px_0_#fff]">
        {BOTTOM_GROUPS.map((group, i) => <ToolGroup key={i} group={group} />)}
      </div>

      <footer className="flex h-[20px] shrink-0 gap-[3px] pt-[3px] leading-[16px]">
        <span className="flex-1 pl-[2px]">Ready</span>
        <span className="w-[169px] border-t border-l border-[#a0a0a0] pl-px">UCS:</span>
        <span className="w-[168px] border-t border-l border-[#a0a0a0] pl-px">GCS:</span>
      </footer>
      <VolumeWidget />
    </div>
  )
}
